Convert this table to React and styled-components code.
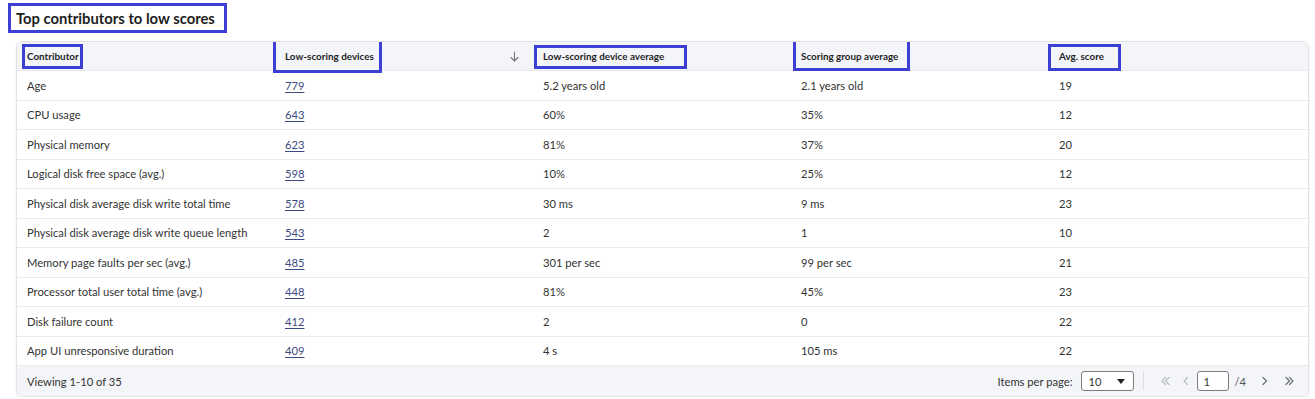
import React from "react";
import styled, { createGlobalStyle } from "styled-components";

const Global = createGlobalStyle`
  html, body { margin: 0; padding: 0; background: #ffffff; }
  body { font-family: Lato, "Open Sans", sans-serif; color: #2f2f2f; }
`;

const Page = styled.div`
  padding: 3px 8px 0 8px;
  width: 1299px;
`;

const Annot = styled.div`
  border: 3px solid #3d3fd2;
  box-sizing: border-box;
`;

const TitleBox = styled(Annot)`
  display: inline-flex;
  align-items: center;
  height: 30px;
  padding: 0 9px 0 5px;
`;

const Title = styled.h2`
  margin: 0;
  font-size: 14.8px;
  font-weight: 700;
  color: #1e1e1e;
`;

const Card = styled.div`
  margin: 8px 0 0 8px;
  width: 1291px;
  border: 1px solid #e1e3e8;
  border-radius: 6px;
  overflow: hidden;
  box-shadow: 0 1px 3px rgba(0, 0, 0, 0.08);
`;

const Row = styled.div`
  display: grid;
  grid-template-columns: repeat(5, 258px);
  height: ${(p) => p.$h}px;
  background: ${(p) => (p.$head ? "#f3f5f9" : "#ffffff")};
  border-bottom: 1px solid #e9eaee;
  box-sizing: border-box;
`;

const Cell = styled.div`
  position: relative;
  display: flex;
  align-items: center;
  justify-content: space-between;
  padding: 0 14px 0 10px;
  font-size: 11.2px;
  color: #333;
`;

const HeadText = styled.span`
  font-size: 9.9px;
  font-weight: 700;
  color: #1f1f1f;
`;

const Highlight = styled(Annot)`
  position: absolute;
  left: ${(p) => p.$l}px;
  top: ${(p) => p.$t}px;
  width: ${(p) => p.$w}px;
  height: ${(p) => p.$hh}px;
  pointer-events: none;
`;

const NumLink = styled.a`
  color: #3c4a80;
  text-decoration: underline;
  text-underline-offset: 2px;
  cursor: pointer;
`;

const Footer = styled.div`
  display: flex;
  align-items: center;
  justify-content: space-between;
  height: 30px;
  padding: 0 12px 0 10px;
  background: #f3f5f9;
  font-size: 11.2px;
  color: #333;
`;

const Pager = styled.div`
  display: flex;
  align-items: center;
`;

const Label = styled.span`
  margin-right: 9px;
  color: #333;
`;

const Select = styled.div`
  width: 53px;
  height: 20px;
  box-sizing: border-box;
  border: 1px solid #7d7d7d;
  border-radius: 3px;
  background: #fff;
  display: flex;
  align-items: center;
  justify-content: space-between;
  padding: 0 8px 0 6px;
`;

const Divider = styled.span`
  width: 1px;
  height: 18px;
  background: #dcdde2;
  margin: 0 14px 0 9px;
`;

const NavBtn = styled.span`
  display: inline-flex;
  align-items: center;
  justify-content: center;
  width: ${(p) => p.$w || 14}px;
  color: ${(p) => (p.$off ? "#b9bcc4" : "#6b6e76")};
  margin-right: ${(p) => p.$mr || 0}px;
`;

const PageInput = styled.div`
  width: 32px;
  height: 20px;
  box-sizing: border-box;
  border: 1px solid #7d7d7d;
  border-radius: 3px;
  background: #fff;
  display: flex;
  align-items: center;
  padding-left: 5px;
  margin: 0 5px 0 2px;
`;

const Total = styled.span`
  margin-right: 14px;
  color: #555;
`;

const Chevron = ({ dir = "right", double }) => {
  const single = dir === "right" ? "M2 1.5 L5.5 5 L2 8.5" : "M5.5 1.5 L2 5 L5.5 8.5";
  const second = dir === "right" ? "M5.5 1.5 L9 5 L5.5 8.5" : "M9 1.5 L5.5 5 L9 8.5";
  return (
    <svg width={double ? 11 : 8} height="10" viewBox={double ? "0 0 11 10" : "0 0 8 10"} fill="none" stroke="currentColor" strokeWidth="1.2" strokeLinecap="round" strokeLinejoin="round">
      <path d={single} />
      {double && <path d={second} />}
    </svg>
  );
};

const headers = [
  { t: "Contributor", hl: { l: 5, t: 2, w: 61, h: 25 } },
  { t: "Low-scoring devices", hl: { l: -2, t: -3, w: 109, h: 34 }, sort: true },
  { t: "Low-scoring device average", hl: { l: 1, t: 3, w: 153, h: 24 } },
  { t: "Scoring group average", hl: { l: 2, t: -3, w: 117, h: 32 } },
  { t: "Avg. score", hl: { l: -1, t: 2, w: 73, h: 27 } },
];

const rows = [
  ["Age", "779", "5.2 years old", "2.1 years old", "19"],
  ["CPU usage", "643", "60%", "35%", "12"],
  ["Physical memory", "623", "81%", "37%", "20"],
  ["Logical disk free space (avg.)", "598", "10%", "25%", "12"],
  ["Physical disk average disk write total time", "578", "30 ms", "9 ms", "23"],
  ["Physical disk average disk write queue length", "543", "2", "1", "10"],
  ["Memory page faults per sec (avg.)", "485", "301 per sec", "99 per sec", "21"],
  ["Processor total user total time (avg.)", "448", "81%", "45%", "23"],
  ["Disk failure count", "412", "2", "0", "22"],
  ["App UI unresponsive duration", "409", "4 s", "105 ms", "22"],
];

export default function App() {
  return (
    <Page>
      <Global />
      <TitleBox>
        <Title>Top contributors to low scores</Title>
      </TitleBox>
      <Card>
        <Row $head $h={29}>
          {headers.map((h) => (
            <Cell key={h.t}>
              <HeadText>{h.t}</HeadText>
              {h.sort && (
                <svg width="9" height="11" viewBox="0 0 9 11" fill="none" stroke="#777" strokeWidth="1.1" strokeLinecap="round" strokeLinejoin="round">
                  <path d="M4.5 1 V10 M1 6.5 L4.5 10 L8 6.5" />
                </svg>
              )}
              <Highlight $l={h.hl.l} $t={h.hl.t} $w={h.hl.w} $hh={h.hl.h} />
            </Cell>
          ))}
        </Row>
        {rows.map((r) => (
          <Row key={r[0]} $h={29.5}>
            <Cell>{r[0]}</Cell>
            <Cell>
              <NumLink>{r[1]}</NumLink>
            </Cell>
            <Cell>{r[2]}</Cell>
            <Cell>{r[3]}</Cell>
            <Cell>{r[4]}</Cell>
          </Row>
        ))}
        <Footer>
          <span>Viewing 1-10 of 35</span>
          <Pager>
            <Label>Items per page:</Label>
            <Select>
              <span>10</span>
              <svg width="8" height="5" viewBox="0 0 8 5">
                <path d="M0 0 H8 L4 5 Z" fill="#222" />
              </svg>
            </Select>
            <Divider />
            <NavBtn $off $w={14} $mr={9}>
              <Chevron dir="left" double />
            </NavBtn>
            <NavBtn $off $w={10} $mr={4}>
              <Chevron dir="left" />
            </NavBtn>
            <PageInput>1</PageInput>
            <Total>/4</Total>
            <NavBtn $w={10} $mr={12}>
              <Chevron dir="right" />
            </NavBtn>
            <NavBtn $w={14}>
              <Chevron dir="right" double />
            </NavBtn>
          </Pager>
        </Footer>
      </Card>
    </Page>
  );
}
